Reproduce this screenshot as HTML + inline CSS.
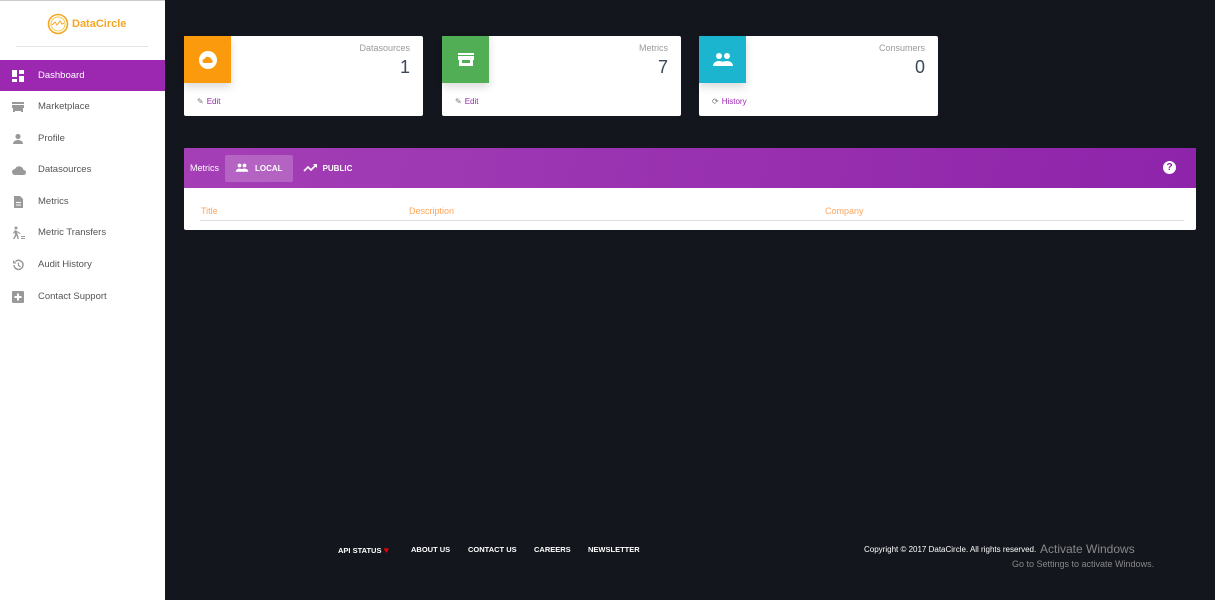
<!DOCTYPE html>
<html><head><meta charset="utf-8"><style>
*{box-sizing:border-box;margin:0;padding:0}
body{width:1215px;height:600px;overflow:hidden;background:#13161d;font-family:"Liberation Sans",sans-serif;position:relative}
.side{position:absolute;left:0;top:0;width:165px;height:600px;background:#fff;border-top:1px solid #ccc}
.logo{position:absolute;left:47px;top:12px;display:flex;align-items:center;gap:3px;color:#f5a623;font-size:11px;font-weight:bold}
.hr{position:absolute;left:16px;top:45px;width:132px;height:1px;background:#e4e4e4}
.nav{position:absolute;left:0;width:165px;height:31px;display:flex;align-items:center;font-size:9.5px;color:#555}
.nav svg{position:absolute;left:11px}
.nav span{position:absolute;left:38px}
.nav.act{background:#9c27b0;color:#fff}
.card{position:absolute;top:36px;width:239px;height:80px;background:#fff;border-radius:2px}
.ib{position:absolute;left:0;top:0;width:47px;height:47px;display:flex;align-items:center;justify-content:center;box-shadow:0 4px 8px rgba(0,0,0,.15)}
.lab{position:absolute;right:13px;top:7px;font-size:9px;color:#999}
.num{position:absolute;right:13px;top:21px;font-size:18px;color:#3c4858;font-weight:300}
.ft{position:absolute;left:13px;top:61px;font-size:8px;color:#9c27b0;display:flex;align-items:center;gap:3px}
.panel{position:absolute;left:184px;top:148px;width:1012px;height:82px;background:#fff;border-radius:2px;overflow:hidden}
.ph{height:40px;background:linear-gradient(100deg,#a43fb6,#8e24aa);display:flex;align-items:center;color:#fff;font-size:9px;position:relative}
.tab{display:flex;align-items:center;gap:6px;height:27px;padding:0 10px;font-weight:bold;font-size:8px}
.th{position:absolute;top:58px;font-size:9px;color:#ffa55a}
.foot{position:absolute;top:545px;font-size:7.5px;color:#fff;font-weight:bold}
</style></head><body>
<div class="side">
 <div class="logo"><svg width="22" height="22" viewBox="0 0 22 22"><circle cx="11" cy="11" r="9.5" fill="none" stroke="#f5a623" stroke-width="1.6"/><circle cx="11" cy="11" r="7" fill="none" stroke="#f9c84a" stroke-width="1"/><path d="M5 12l3-3 2 3 3-4 2 3 2-1" fill="none" stroke="#f5a623" stroke-width="1"/></svg>DataCircle</div>
 <div class="hr"></div>
 <div class="nav act" style="top:59px"><svg width="14" height="14" viewBox="0 0 14 14" fill="#fff"><rect x="1" y="1" width="5" height="7"/><rect x="8" y="1" width="5" height="4"/><rect x="1" y="10" width="5" height="3"/><rect x="8" y="7" width="5" height="6"/></svg><span>Dashboard</span></div>
 <div class="nav" style="top:90px"><svg width="14" height="14" viewBox="0 0 14 14" fill="#999"><rect x="1" y="2" width="12" height="2"/><rect x="1" y="5" width="12" height="3"/><rect x="2" y="8" width="2" height="4"/><rect x="4" y="8" width="6" height="3"/><rect x="10" y="8" width="2" height="4"/></svg><span>Marketplace</span></div>
 <div class="nav" style="top:122px"><svg width="14" height="14" viewBox="0 0 14 14" fill="#999"><circle cx="7" cy="4.5" r="2.6"/><path d="M2 12c0-3 3-4 5-4s5 1 5 4z"/></svg><span>Profile</span></div>
 <div class="nav" style="top:153px"><svg width="16" height="14" viewBox="0 0 16 14" fill="#999"><path d="M4 12a3 3 0 010-6 4.5 4.5 0 018.5 1 2.5 2.5 0 010 5z"/></svg><span>Datasources</span></div>
 <div class="nav" style="top:185px"><svg width="14" height="14" viewBox="0 0 14 14" fill="#999"><path d="M3 1h6l3 3v9H3z"/><rect x="5" y="7" width="5" height="1" fill="#fff"/><rect x="5" y="9.5" width="5" height="1" fill="#fff"/></svg><span>Metrics</span></div>
 <div class="nav" style="top:216px"><svg width="14" height="14" viewBox="0 0 14 14" fill="#999"><circle cx="5" cy="2" r="1.5"/><path d="M4 4l-2 3 1 1 1-2v3l-2 4h1.5l2-3.5 1 3.5h1.5l-1.5-5V6l2 2 1-1z"/><rect x="10" y="10" width="4" height="1"/><rect x="10" y="12" width="4" height="1"/></svg><span>Metric Transfers</span></div>
 <div class="nav" style="top:248px"><svg width="14" height="14" viewBox="0 0 14 14"><path d="M3 7a4.5 4.5 0 109-.1 4.5 4.5 0 00-7.5-3.4" fill="none" stroke="#999" stroke-width="1.5"/><path d="M2 2v3.5h3.5z" fill="#999"/><path d="M7.5 4.5V7.5l2 1.5" fill="none" stroke="#999" stroke-width="1.2"/></svg><span>Audit History</span></div>
 <div class="nav" style="top:280px"><svg width="14" height="14" viewBox="0 0 14 14"><rect x="1" y="1" width="12" height="12" rx="1" fill="#999"/><path d="M7 3.5v7M3.5 7h7" stroke="#fff" stroke-width="2"/></svg><span>Contact Support</span></div>
</div>

<div class="card" style="left:184px"><div class="ib" style="background:#fb9a0d"><svg width="20" height="20" viewBox="0 0 20 20"><circle cx="10" cy="10" r="9" fill="#fff"/><path d="M6.5 13a2 2 0 010-4 3.6 3.6 0 016.8.5 1.8 1.8 0 010 3.5z" fill="#fb9a0d"/></svg></div><div class="lab">Datasources</div><div class="num">1</div><div class="ft"><span style="color:#777">✎</span>Edit</div></div>
<div class="card" style="left:442px"><div class="ib" style="background:#51ae55"><svg width="18" height="16" viewBox="0 0 18 16" fill="#fff"><rect x="1" y="1" width="16" height="2"/><rect x="1" y="4" width="16" height="4"/><rect x="2" y="8" width="3" height="6"/><rect x="5" y="11" width="8" height="3"/><rect x="13" y="8" width="3" height="6"/></svg></div><div class="lab">Metrics</div><div class="num">7</div><div class="ft"><span style="color:#777">✎</span>Edit</div></div>
<div class="card" style="left:699px"><div class="ib" style="background:#1bb5cf"><svg width="22" height="16" viewBox="0 0 22 16" fill="#fff"><circle cx="7" cy="4" r="3"/><circle cx="15" cy="4" r="3"/><path d="M1 14c0-4 4-5 6-5s6 1 6 5z"/><path d="M12 14c0-2-1-3-2-4 1-.5 3-1 5-1 2 0 6 1 6 5z"/></svg></div><div class="lab">Consumers</div><div class="num">0</div><div class="ft"><span style="color:#777">⟳</span>History</div></div>

<div class="panel">
 <div class="ph"><span style="margin-left:6px;margin-right:6px">Metrics</span>
  <div class="tab" style="background:rgba(255,255,255,.2);border-radius:2px"><svg width="14" height="10" viewBox="0 0 22 16" fill="#fff"><circle cx="7" cy="4" r="3"/><circle cx="15" cy="4" r="3"/><path d="M1 14c0-4 4-5 6-5s6 1 6 5z"/><path d="M12 14c0-2-1-3-2-4 1-.5 3-1 5-1 2 0 6 1 6 5z"/></svg>LOCAL</div>
  <div class="tab"><svg width="14" height="10" viewBox="0 0 14 10"><path d="M1 8l4-4 3 3 5-5" fill="none" stroke="#fff" stroke-width="1.6"/><path d="M10 1h4v4z" fill="#fff"/></svg>PUBLIC</div>
  <div style="position:absolute;right:20px;top:13px;width:13px;height:13px;border-radius:50%;background:#fff;color:#8e24aa;font-size:10px;font-weight:bold;text-align:center;line-height:13px">?</div>
 </div>
 <div class="th" style="left:17px">Title</div><div class="th" style="left:225px">Description</div><div class="th" style="left:641px">Company</div>
 <div style="position:absolute;left:16px;top:72px;width:984px;height:1px;background:#ddd"></div>
</div>

<div class="foot" style="left:338px">API STATUS <span style="color:#e00;font-size:9px">♥</span></div>
<div class="foot" style="left:411px">ABOUT US</div>
<div class="foot" style="left:468px">CONTACT US</div>
<div class="foot" style="left:534px">CAREERS</div>
<div class="foot" style="left:588px">NEWSLETTER</div>
<div class="foot" style="left:864px;font-weight:normal;font-size:8px">Copyright © 2017 DataCircle. All rights reserved.</div>
<div style="position:absolute;left:1040px;top:542px;font-size:12px;color:#888">Activate Windows</div>
<div style="position:absolute;left:1012px;top:559px;font-size:9px;color:#888">Go to Settings to activate Windows.</div>
</body></html>
